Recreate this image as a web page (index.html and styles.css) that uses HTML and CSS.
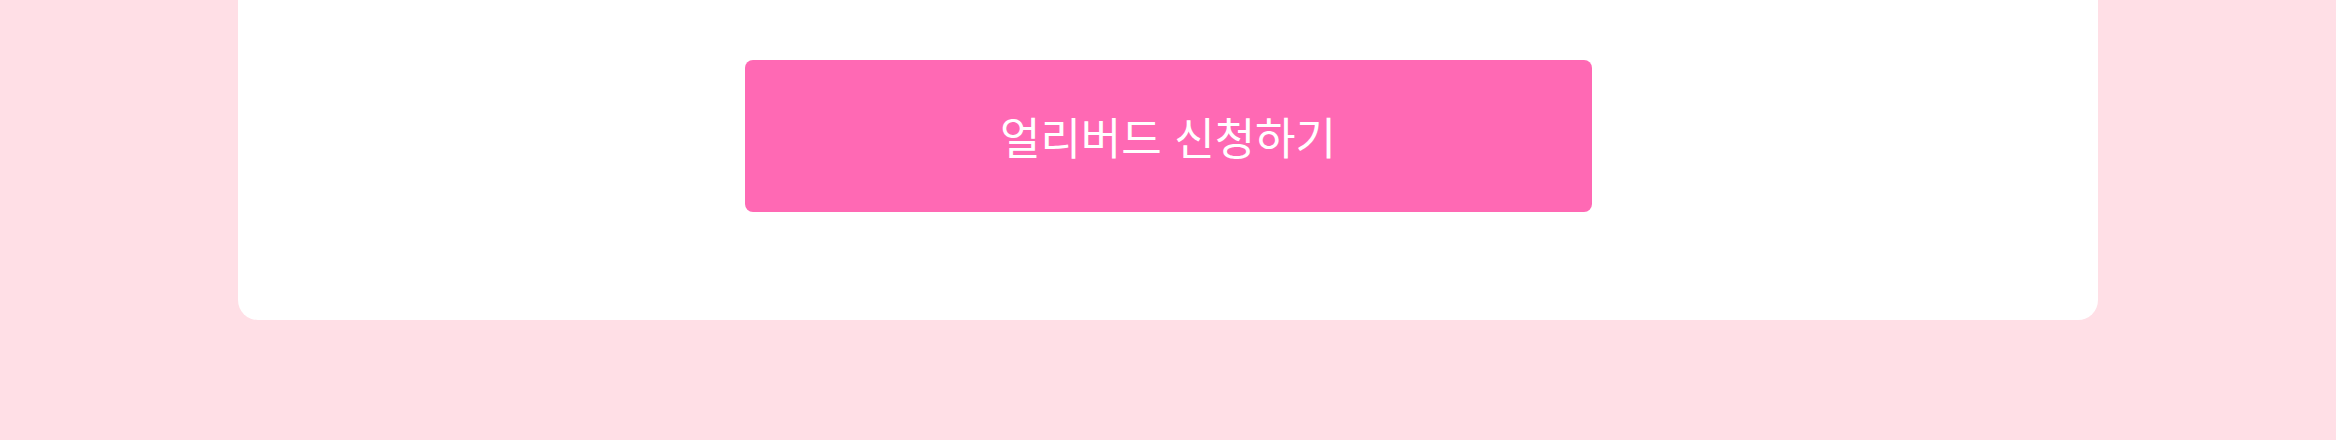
FILE: index.html
```html
<!DOCTYPE html>
<html lang="ko">
<head>
  <meta charset="UTF-8">
  <meta name="viewport" content="width=device-width, initial-scale=1.0">
  <title>얼리버드 신청</title>
  <link rel="stylesheet" href="styles.css">
</head>
<body>
  <div class="wrapper">
    <section class="apply-card">
      <button type="button" class="apply-btn">얼리버드 신청하기</button>
    </section>
  </div>
</body>
</html>
```

FILE: styles.css
```css
body {
    margin: 0;
    background-color: #FFDFE6;
    font-family: "Noto Sans CJK KR", "Noto Sans", sans-serif;
}
.wrapper {
    padding: 0 238px 120px;
}
.apply-card {
    display: flex;
    justify-content: center;
    background: #fff;
    padding: 60px 0 108px;
    border-radius: 0 0 20px 20px;
}
.apply-btn {
    width: 847px;
    height: 152px;
    border: none;
    border-radius: 8px;
    background-color: #FF69B4;
    color: #fff;
    font-family: inherit;
    font-size: 44px;
    font-weight: 400;
    cursor: pointer;
}
.apply-btn:hover {
    background-color: #ff5aa9;
}
```
